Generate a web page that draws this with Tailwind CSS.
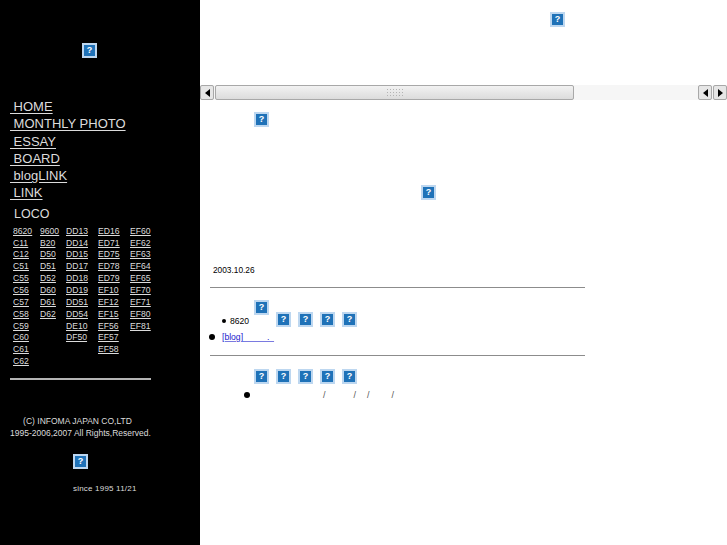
<!DOCTYPE html>
<html lang="en">
<head>
    <meta charset="UTF-8">
    <title>LOCO</title>
    <script src="https://cdn.jsdelivr.net/npm/@tailwindcss/browser@4"></script>
</head>
<body class="bg-white font-['Liberation_Sans',Arial,sans-serif] overflow-hidden">
<div class="flex w-[727px] h-[545px] overflow-hidden">
    <!-- left column -->
    <aside class="w-[200px] shrink-0 bg-black text-[#dcdcdc] flex flex-col">
        <div class="ml-[82px] mt-[43px]">
            <div class="w-[15px] h-[15px] border-2 border-[#bdd7f0] bg-[#1f72b8] flex items-center justify-center text-[9px] leading-none font-bold text-white">?</div>
        </div>
        <nav class="ml-[10px] mt-[40px] flex flex-col text-[13px] leading-[17.3px]">
            <a class="underline underline-offset-2 w-fit whitespace-pre"> HOME</a>
            <a class="underline underline-offset-2 w-fit whitespace-pre"> MONTHLY PHOTO</a>
            <a class="underline underline-offset-2 w-fit whitespace-pre"> ESSAY</a>
            <a class="underline underline-offset-2 w-fit whitespace-pre"> BOARD</a>
            <a class="underline underline-offset-2 w-fit whitespace-pre"> blogLINK</a>
            <a class="underline underline-offset-2 w-fit whitespace-pre"> LINK</a>
        </nav>
        <div class="ml-[14px] mt-[4px] text-[12.5px] leading-[17px]">LOCO</div>
        <div class="ml-[13px] mt-[3px] grid grid-cols-[27px_26px_32px_32px_32px] grid-flow-col grid-rows-[repeat(12,11.85px)] text-[8.6px] leading-[11.85px] underline underline-offset-1">
            <a>8620</a><a>C11</a><a>C12</a><a>C51</a><a>C55</a><a>C56</a><a>C57</a><a>C58</a><a>C59</a><a>C60</a><a>C61</a><a>C62</a>
            <a>9600</a><a>B20</a><a>D50</a><a>D51</a><a>D52</a><a>D60</a><a>D61</a><a>D62</a><span></span><span></span><span></span><span></span>
            <a>DD13</a><a>DD14</a><a>DD15</a><a>DD17</a><a>DD18</a><a>DD19</a><a>DD51</a><a>DD54</a><a>DE10</a><a>DF50</a><span></span><span></span>
            <a>ED16</a><a>ED71</a><a>ED75</a><a>ED78</a><a>ED79</a><a>EF10</a><a>EF12</a><a>EF15</a><a>EF56</a><a>EF57</a><a>EF58</a><span></span>
            <a>EF60</a><a>EF62</a><a>EF63</a><a>EF64</a><a>EF65</a><a>EF70</a><a>EF71</a><a>EF80</a><a>EF81</a><span></span><span></span><span></span>
        </div>
        <div class="ml-[10px] mt-[10px] w-[141px] h-[2px] bg-[#b4b4b4]"></div>
        <div class="w-[141px] ml-[10px] mt-[35px] text-[8.5px] leading-[12px] text-center whitespace-nowrap">
            <div class="pr-[6px]">(C) INFOMA JAPAN CO,LTD</div>
            <div>1995-2006,2007 All Rights,Reserved.</div>
        </div>
        <div class="ml-[73px] mt-[15px]">
            <div class="w-[15px] h-[15px] border-2 border-[#bdd7f0] bg-[#1f72b8] flex items-center justify-center text-[9px] leading-none font-bold text-white">?</div>
        </div>
        <div class="ml-[73px] mt-[14px] text-[8px] leading-[12px] tracking-[0.2px]">since 1995 11/21</div>
    </aside>

    <!-- right column -->
    <main class="flex-1 flex flex-col text-black">
        <div class="ml-[350px] mt-[12px]">
            <div class="w-[15px] h-[15px] border-2 border-[#bdd7f0] bg-[#1f72b8] flex items-center justify-center text-[9px] leading-none font-bold text-white">?</div>
        </div>
        <!-- scrollbar -->
        <div class="mt-[58px] h-[15px] flex bg-[#f6f6f6]">
            <div class="w-[14px] border border-[#a8a8a8] rounded-[2px] bg-[#e6e6e6] flex items-center justify-center">
                <div class="border-y-[4px] border-r-[5px] border-y-transparent border-r-black"></div>
            </div>
            <div class="ml-[1px] w-[359px] border border-[#a8a8a8] rounded-[2px] bg-gradient-to-b from-[#f2f2f2] to-[#dcdcdc] flex items-center justify-center">
                <div class="w-[17px] h-[9px] bg-[radial-gradient(#b4b4b4_1px,transparent_1px)] bg-[length:3px_3px]"></div>
            </div>
            <div class="flex-1"></div>
            <div class="w-[14px] border border-[#a8a8a8] rounded-[2px] bg-[#e6e6e6] flex items-center justify-center">
                <div class="border-y-[4px] border-r-[5px] border-y-transparent border-r-black"></div>
            </div>
            <div class="ml-[1px] w-[14px] border border-[#a8a8a8] rounded-[2px] bg-[#e6e6e6] flex items-center justify-center">
                <div class="border-y-[4px] border-l-[5px] border-y-transparent border-l-black"></div>
            </div>
        </div>
        <div class="ml-[54px] mt-[12px]">
            <div class="w-[15px] h-[15px] border-2 border-[#bdd7f0] bg-[#1f72b8] flex items-center justify-center text-[9px] leading-none font-bold text-white">?</div>
        </div>
        <div class="ml-[221px] mt-[58px]">
            <div class="w-[15px] h-[15px] border-2 border-[#bdd7f0] bg-[#1f72b8] flex items-center justify-center text-[9px] leading-none font-bold text-white">?</div>
        </div>
        <div class="ml-[13px] mt-[64px] text-[8.3px] leading-[12px]">2003.10.26</div>
        <div class="ml-[10px] mt-[11px] w-[375px] h-px bg-[#8c8c8c]"></div>
        <div class="ml-[54px] mt-[12px]">
            <div class="w-[15px] h-[15px] border-2 border-[#bdd7f0] bg-[#1f72b8] flex items-center justify-center text-[9px] leading-none font-bold text-white">?</div>
        </div>
        <div class="ml-[22px] -mt-[3px] flex items-end h-[15px]">
            <div class="w-[4px] h-[4px] rounded-full bg-black mb-[4px]"></div>
            <div class="ml-[4px] mb-[1px] text-[8.6px] leading-[10px] w-[46px]">8620</div>
            <div class="flex gap-[7px]">
                <div class="w-[15px] h-[15px] border-2 border-[#bdd7f0] bg-[#1f72b8] flex items-center justify-center text-[9px] leading-none font-bold text-white">?</div>
                <div class="w-[15px] h-[15px] border-2 border-[#bdd7f0] bg-[#1f72b8] flex items-center justify-center text-[9px] leading-none font-bold text-white">?</div>
                <div class="w-[15px] h-[15px] border-2 border-[#bdd7f0] bg-[#1f72b8] flex items-center justify-center text-[9px] leading-none font-bold text-white">?</div>
                <div class="w-[15px] h-[15px] border-2 border-[#bdd7f0] bg-[#1f72b8] flex items-center justify-center text-[9px] leading-none font-bold text-white">?</div>
            </div>
        </div>
        <div class="ml-[9px] mt-[4px] flex items-center h-[12px]">
            <div class="w-[6px] h-[6px] rounded-full bg-black"></div>
            <a class="ml-[7px] w-[50px] text-[8.6px] leading-[12px] text-[#2222cc] underline decoration-[#7a7ae0] whitespace-pre">[blog]          .  </a>
        </div>
        <div class="ml-[10px] mt-[12px] w-[375px] h-px bg-[#8c8c8c]"></div>
        <div class="ml-[54px] mt-[13px] flex gap-[7px]">
            <div class="w-[15px] h-[15px] border-2 border-[#bdd7f0] bg-[#1f72b8] flex items-center justify-center text-[9px] leading-none font-bold text-white">?</div>
            <div class="w-[15px] h-[15px] border-2 border-[#bdd7f0] bg-[#1f72b8] flex items-center justify-center text-[9px] leading-none font-bold text-white">?</div>
            <div class="w-[15px] h-[15px] border-2 border-[#bdd7f0] bg-[#1f72b8] flex items-center justify-center text-[9px] leading-none font-bold text-white">?</div>
            <div class="w-[15px] h-[15px] border-2 border-[#bdd7f0] bg-[#1f72b8] flex items-center justify-center text-[9px] leading-none font-bold text-white">?</div>
            <div class="w-[15px] h-[15px] border-2 border-[#bdd7f0] bg-[#1f72b8] flex items-center justify-center text-[9px] leading-none font-bold text-white">?</div>
        </div>
        <div class="ml-[44px] mt-[5px] flex items-center h-[12px] text-[9px] leading-[12px] text-[#555]">
            <div class="w-[6px] h-[6px] rounded-full bg-black"></div>
            <span class="ml-[73px]">/</span>
            <span class="ml-[28px]">/</span>
            <span class="ml-[11px]">/</span>
            <span class="ml-[22px]">/</span>
        </div>
    </main>
</div>
</body>
</html>
